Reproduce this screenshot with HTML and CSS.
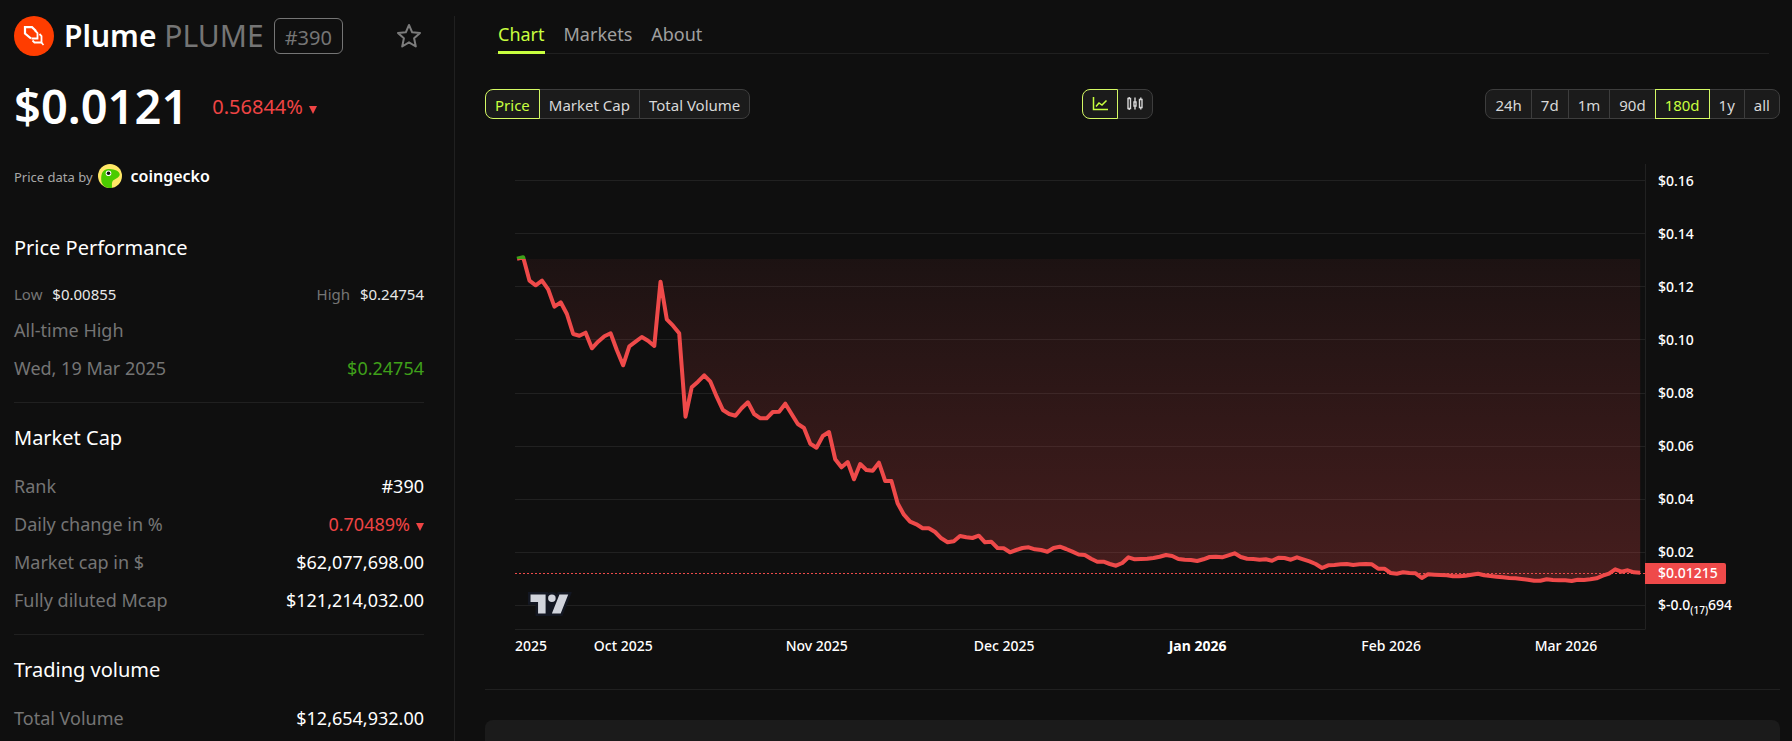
FILE: index.html
```html
<!DOCTYPE html>
<html lang="en">
<head>
<meta charset="utf-8">
<meta name="viewport" content="width=device-width, initial-scale=1">
<title>Plume (PLUME) price</title>
<link rel="stylesheet" href="styles.css">
</head>
<body>
<div class="layout">
  <aside class="sidebar">
    <header class="coin">
      <svg class="coin-logo" viewBox="0 0 40 40" aria-hidden="true">
        <circle cx="20" cy="20" r="20" fill="#ff3d00"/>
        <path d="M17 22.500L11 17.500V11.200H18L22 15" fill="none" stroke="#fff" stroke-width="2.200"/>
        <path d="M21 14.500L23.500 17V22.500H17.500" fill="none" stroke="#fff" stroke-width="1.800"/>
        <path d="M25.500 18L27.500 20V26.500H20.500L18.500 24.500" fill="none" stroke="#fff" stroke-width="1.800"/>
        <path d="M27 26L29.500 29" fill="none" stroke="#fff" stroke-width="1.600"/>
      </svg>
      <h1 class="coin-name">Plume <span class="coin-symbol">PLUME</span></h1>
      <span class="rank-badge">#390</span>
      <button class="star" type="button" aria-label="Add to favourites">
        <svg viewBox="0 0 26 26" aria-hidden="true"><path d="M13 2L16.200 9.300 24 10 18.100 15.300 19.800 23.500 13 19.300 6.200 23.500 7.900 15.300 2 10 9.800 9.300Z" fill="none" stroke="#7c7c7c" stroke-width="2" stroke-linejoin="round"/></svg>
      </button>
    </header>
    <div class="price-line">
      <strong class="price">$0.0121</strong>
      <span class="change">0.56844%<i class="down"></i></span>
    </div>
    <div class="source">
      <span class="source-label">Price data by</span>
      <svg class="gecko" viewBox="0 0 24 24" aria-hidden="true">
        <circle cx="12" cy="12" r="12" fill="#ffe866"/>
        <path d="M3.500 18C2.500 11 4 5.500 10 5C15 5 20 6 21.500 9.500C23 13 17 15 15 16.500C13.500 18 14 21 14 24H11C7 23.500 4.500 21.500 3.500 18Z" fill="#4bcc00"/>
        <circle cx="10.500" cy="9.200" r="2.800" fill="#fff"/><circle cx="10.500" cy="9.200" r="1.800" fill="#111"/>
      </svg>
      <strong class="gecko-name">coingecko</strong>
    </div>

    <section class="stats">
      <h2>Price Performance</h2>
      <div class="range">
        <span>Low <b>$0.00855</b></span>
        <span>High <b>$0.24754</b></span>
      </div>
      <dl>
        <div><dt>All-time High</dt></div>
        <div><dt>Wed, 19 Mar 2025</dt><dd class="up">$0.24754</dd></div>
      </dl>
    </section>
    <section class="stats">
      <h2>Market Cap</h2>
      <dl>
        <div><dt>Rank</dt><dd>#390</dd></div>
        <div><dt>Daily change in %</dt><dd class="neg">0.70489%<i class="down"></i></dd></div>
        <div><dt>Market cap in $</dt><dd>$62,077,698.00</dd></div>
        <div><dt>Fully diluted Mcap</dt><dd>$121,214,032.00</dd></div>
      </dl>
    </section>
    <section class="stats">
      <h2>Trading volume</h2>
      <dl>
        <div><dt>Total Volume</dt><dd>$12,654,932.00</dd></div>
      </dl>
    </section>
  </aside>

  <main class="main">
    <nav class="tabs">
      <a class="active" href="#chart">Chart</a>
      <a href="#markets">Markets</a>
      <a href="#about">About</a>
    </nav>

    <div class="controls">
      <div class="group">
        <button class="active" type="button">Price</button>
        <button type="button">Market Cap</button>
        <button type="button">Total Volume</button>
      </div>
      <div class="group">
        <button class="active" type="button" aria-label="Line chart">
          <svg class="line-icon" viewBox="0 0 16 16" aria-hidden="true"><path d="M1.500 1V13.500H16M4 10.500L7 7 10 9 14.500 4.500" fill="none" stroke="currentColor" stroke-width="1.500"/></svg>
        </button>
        <button type="button" aria-label="Candlestick chart">
          <svg class="candle-icon" viewBox="0 0 16 16" aria-hidden="true"><path d="M1 2.500H3.500V12.500H1ZM7 6H9V10H7ZM12.500 3.500H15V11.500H12.500ZM2.200 1V2.500M2.200 12.500V14M8 1.500V6M8 10V13.500M13.800 1.500V3.500M13.800 11.500V13.500" fill="none" stroke="currentColor" stroke-width="1.400"/></svg>
        </button>
      </div>
      <div class="group">
        <button type="button">24h</button>
        <button type="button">7d</button>
        <button type="button">1m</button>
        <button type="button">90d</button>
        <button class="active" type="button">180d</button>
        <button type="button">1y</button>
        <button type="button">all</button>
      </div>
    </div>

    <div class="chart">
      <div class="pane">
        <svg class="plot" viewBox="515 154 1130 477" preserveAspectRatio="none" role="img" aria-label="Plume price over 180 days">
          <defs>
            <linearGradient id="loss" gradientUnits="userSpaceOnUse" x1="0" y1="259" x2="0" y2="605">
              <stop offset="0" stop-color="#ef4a4a" stop-opacity=".06"/>
              <stop offset="1" stop-color="#ef4a4a" stop-opacity=".26"/>
            </linearGradient>
            <clipPath id="above"><rect x="515" y="154" width="1130" height="105"/></clipPath>
            <clipPath id="below"><rect x="515" y="259" width="1130" height="372"/></clipPath>
          </defs>
          <path class="grid" d="M515 180.500H1645M515 233.500H1645M515 286.500H1645M515 339.500H1645M515 393.500H1645M515 446.500H1645M515 499.500H1645M515 552.500H1645M515 605.500H1645"/>
          <path id="area" fill="url(#loss)" clip-path="url(#below)"/>
          <path class="last" d="M515 573.500H1645"/>
          <path class="series gain" clip-path="url(#above)"/>
          <path class="series loss" clip-path="url(#below)"/>
          <path class="axis" d="M1645.500 164V629.500M515 629.500H1645"/>
        </svg>
        <svg class="tv" viewBox="0 0 35 19" aria-hidden="true">
          <path fill="#131722" d="M2 0H0v10h6v9h21.400l.5-1.300 6-15 1-2.700H23.700l-.5 1.300-.2.600a5 5 0 0 0-7-.9V0H2z"/>
          <path fill="#d1d4dc" d="M14 2H2v6h6v9h6V2zm12 15h-7l6-15h7l-6 15zm-7-9a3 3 0 1 0 0-6 3 3 0 0 0 0 6z"/>
        </svg>
      </div>
      <div class="scale">
        <span>$0.16</span><span>$0.14</span><span>$0.12</span><span>$0.10</span><span>$0.08</span><span>$0.06</span><span>$0.04</span><span>$0.02</span>
        <span>$-0.0<small>(17)</small>694</span>
        <output class="last-price">$0.01215</output>
      </div>
      <div class="months">
        <span class="start">2025</span><span class="oct">Oct 2025</span><span class="nov">Nov 2025</span><span class="dec">Dec 2025</span><span class="jan">Jan 2026</span><span class="feb">Feb 2026</span><span class="mar">Mar 2026</span>
      </div>
    </div>
    <hr class="divider">
    <div class="card"></div>
  </main>
</div>
<script src="chart.js"></script>
</body>
</html>
```

FILE: styles.css
```css
* { box-sizing: border-box; }

body {
  margin: 0;
  background: #0f0f0f;
  color: #fff;
  font-family: "Noto Sans", sans-serif;
  font-size: 18px;
  line-height: 25px;
}

h1, h2, dl, dd { margin: 0; font-weight: 400; }

button { font: inherit; cursor: pointer; }

.layout {
  display: grid;
  grid-template-columns: 455px minmax(0, 1fr);
  min-height: 100vh;
  padding-top: 16px;
}

.sidebar {
  padding: 0 30px 0 14px;
  border-right: 1px solid #202020;
}

.coin {
  display: flex;
  align-items: center;
  height: 40px;
}

.coin-logo { width: 40px; height: 40px; margin-right: 10px; }

.coin-name {
  font-size: 30px;
  font-weight: 600;
  line-height: 40px;
}

.coin-symbol { color: #757575; font-weight: 400; }

.rank-badge {
  height: 36px;
  margin-left: 10px;
  padding: 3px 10px 0;
  border: 1px solid #757575;
  border-radius: 6px;
  color: #757575;
  font-size: 20px;
  line-height: 32px;
}

.star {
  width: 26px;
  height: 26px;
  margin-left: auto;
  margin-right: 2px;
  padding: 0;
  border: 0;
  background: none;
}

.star svg { display: block; }

.price-line {
  display: flex;
  align-items: center;
  gap: 24px;
  margin-top: 19px;
  height: 62px;
}

.price { font-size: 47px; font-weight: 600; line-height: 62px; }

.change { color: #ef4444; font-size: 20px; }

.down {
  display: inline-block;
  margin-left: 6px;
  border: 4px solid transparent;
  border-top: 8px solid #ef4444;
  border-bottom: 0;
}

.source {
  display: flex;
  align-items: center;
  height: 26px;
  margin-top: 26px;
  color: #a8a8a8;
  font-size: 13px;
}

.source-label { padding-top: 3px; }

.gecko { width: 24px; height: 24px; margin: 0 9px 0 5px; }

.gecko-name { color: #fff; font-size: 16px; font-weight: 600; line-height: 24px; }

.stats {
  padding: 21px 0;
  border-bottom: 1px solid #202020;
}

.source + .stats { padding-top: 45px; }

.stats:last-child { padding-bottom: 0; border-bottom: 0; }

.stats h2 { margin-bottom: 22px; font-size: 20px; line-height: 28px; }

.range {
  display: flex;
  justify-content: space-between;
  margin-bottom: 13px;
  color: #757575;
  font-size: 15px;
  line-height: 21px;
}

.range b { margin-left: 6px; color: #e8e8e8; font-weight: 400; }

.stats dl { display: grid; gap: 13px; }

.stats dl div { display: flex; justify-content: space-between; }

.stats dt { color: #757575; }

.stats .up { color: #3fa01a; }

.stats .neg { color: #ef4444; }

.main {
  display: flex;
  flex-direction: column;
  padding: 0 12px 0 30px;
}

.tabs {
  display: flex;
  gap: 19px;
  height: 38px;
  margin: 0 11px 0 10px;
  padding: 6px 0 0 3px;
  border-bottom: 1px solid #202020;
}

.tabs a { height: 32px; color: #a0a0a0; text-decoration: none; }

.tabs .active { border-bottom: 3px solid #c8ff3f; color: #c8ff3f; }

.controls {
  display: flex;
  justify-content: space-between;
  margin-top: 35px;
}

.group { display: flex; height: 30px; }

.group button {
  display: flex;
  align-items: center;
  margin-left: -1px;
  padding: 2px 9px 0;
  border: 1px solid #3d3d3d;
  background: #1b1b1b;
  color: #d8d8d8;
  font-size: 15px;
  line-height: 25px;
}

.group button:first-child { margin-left: 0; border-radius: 8px 0 0 8px; }

.group button:last-child { border-radius: 0 8px 8px 0; }

.group .active { position: relative; border-color: #d4f964; color: #c8ff3f; }

.group svg { width: 16px; height: 16px; margin-bottom: 2px; }

.chart {
  display: grid;
  grid-template-columns: minmax(0, 1fr) 135px;
  grid-template-rows: 477px 58px;
  margin: 35px 0 0 30px;
  font-size: 14px;
  font-weight: 500;
  line-height: 20px;
}

.pane { position: relative; }

.plot { display: block; width: 100%; height: 100%; overflow: visible; }

.plot path { vector-effect: non-scaling-stroke; }

.grid, .axis { fill: none; stroke: #fff; stroke-opacity: .08; }

.last { stroke: #ef4a4a; stroke-dasharray: 2 2; }

.series { fill: none; stroke-width: 4; stroke-linejoin: round; }

.gain { stroke: #3fa01a; }

.loss { stroke: #ef4a4a; }

.tv {
  position: absolute;
  left: 13px;
  bottom: 15px;
  width: 44px;
  height: 24px;
}

.scale {
  position: relative;
  display: grid;
  grid-template-rows: repeat(9, 1fr);
  align-items: center;
  padding-left: 13px;
}

.scale small { font-size: 10px; vertical-align: sub; line-height: 10px; }

.last-price {
  position: absolute;
  top: 409px;
  left: 0;
  padding: 0 8px 1px 13px;
  border-radius: 0 2px 2px 0;
  background: #ef4a4a;
}

.months {
  display: grid;
  grid-template-columns: repeat(181, minmax(0, 1fr));
  padding-top: 5px;
  text-align: center;
  white-space: nowrap;
}

.months span { grid-row: 1; padding-right: 2px; }
.months .start { grid-column: 1 / span 5; padding: 0; }
.months .oct { grid-column: 13 / span 11; }
.months .nov { grid-column: 44 / span 11; }
.months .dec { grid-column: 74 / span 11; }
.months .jan { grid-column: 105 / span 11; font-weight: 700; }
.months .feb { grid-column: 136 / span 11; }
.months .mar { grid-column: 164 / span 11; }

.divider {
  width: 100%;
  height: 1px;
  margin: 0;
  border: 0;
  background: #202020;
}

.card {
  flex: 1;
  min-height: 20px;
  margin-top: 30px;
  border-radius: 8px 8px 0 0;
  background: #1b1b1b;
}
```

FILE: chart.js
```js
// Daily closes as heights on the plot, oldest first.
const closes = [
  258.7, 257.3, 280.7, 285.3, 280.7, 289.3, 306.7, 302.3, 314, 334, 335.7, 332.7,
  348.3, 341.7, 336.3, 333.3, 350, 365.3, 346.3, 341.7, 337, 340.7, 346, 281.7,
  319.3, 325.7, 333.3, 416.7, 387.3, 381.7, 375.3, 381.7, 396.7, 410, 414, 415.7,
  408.3, 402.3, 414, 418.3, 418.3, 412, 411.7, 403.7, 414, 424, 428, 443.7, 447.7,
  436, 432, 459.3, 467.3, 462, 479.3, 464, 470, 470.7, 462.7, 481, 481, 503.3,
  514.7, 521.7, 524.3, 528.3, 528.3, 532, 538.3, 542.3, 541.3, 536, 537.3, 538,
  535.7, 542.3, 541.7, 548, 548.3, 552.3, 550, 548, 547.3, 549.3, 550, 551.7, 548,
  546.7, 549, 551.7, 554.5, 555, 558.7, 561.7, 561.7, 564, 565.7, 563, 557.3,
  559.3, 559, 558.7, 558, 556.7, 555, 556, 559, 559.7, 560, 561, 559.3, 557, 556.7,
  557.3, 555.3, 553.3, 557, 558.7, 559, 559.7, 559.3, 560.7, 557.7, 558, 559.7,
  557.3, 559.3, 561.3, 564, 568, 565.3, 565, 564.3, 564, 565, 564.3, 564, 564.3,
  568.7, 568.7, 573, 573.7, 572.3, 573, 573.3, 578, 574.3, 574.7, 575, 575.3,
  576.3, 576.3, 575.7, 574.7, 573.7, 575.3, 576, 576.7, 577.3, 578, 578.3, 579,
  579.7, 580.7, 580.7, 579.3, 580, 580.3, 580.3, 581, 579.7, 580, 579.3, 578.3,
  575.7, 573.7, 569.3, 571.7, 570.3, 572.3, 572.7
];
const first = 517;
const step = 6.24;
const line = "M" + closes.map((y, i) => (first + i * step).toFixed(1) + " " + y).join("L");
const end = (first + (closes.length - 1) * step).toFixed(1);

document.querySelectorAll(".series").forEach((path) => path.setAttribute("d", line));
document.getElementById("area").setAttribute("d", line + "H" + end + "V259H" + first + "Z");
```
